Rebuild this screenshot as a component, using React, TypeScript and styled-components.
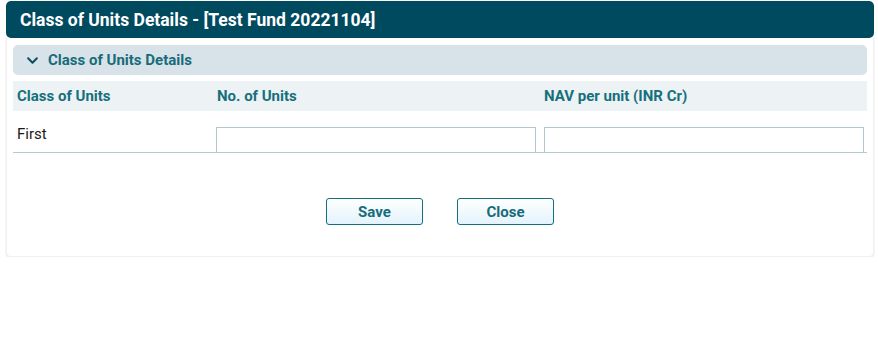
import React from 'react';
import styled, { createGlobalStyle } from 'styled-components';

const GlobalStyle = createGlobalStyle`
  html, body {
    margin: 0;
    padding: 0;
    background: #ffffff;
    font-family: Roboto, "Liberation Sans", Arial, sans-serif;
  }
  * { box-sizing: border-box; }
`;

const Page = styled.div`
  padding: 1px 4px 0 6px;
  width: 878px;
`;

const Window = styled.div`
  width: 868px;
`;

const TitleBar = styled.div`
  height: 37px;
  background: #004a5f;
  border-radius: 5px;
  color: #ffffff;
  font-weight: 700;
  font-size: 17.5px;
  display: flex;
  align-items: center;
  padding-left: 14px;
`;

const Panel = styled.div`
  background: #ffffff;
  border: 1px solid #f0f0f0;
  border-top: none;
  border-radius: 0 0 5px 5px;
  box-shadow: 0 1px 2px rgba(0, 0, 0, 0.12);
  padding: 7px 6px 31px 6px;
`;

const AccordionHeader = styled.div`
  height: 30px;
  background: #d8e3e9;
  border-radius: 5px;
  display: flex;
  align-items: center;
  gap: 8px;
  padding-left: 12px;
  color: #176b7a;
  font-weight: 700;
  font-size: 15px;
`;

const Grid = styled.div`
  display: grid;
  grid-template-columns: 200px 328px 1fr;
  margin-top: 6px;
`;

const HeadCell = styled.div<{ $pad?: number }>`
  height: 30px;
  background: #edf2f5;
  display: flex;
  align-items: center;
  padding-left: ${({ $pad }) => $pad ?? 4}px;
  color: #16707c;
  font-weight: 700;
  font-size: 15px;
`;

const BodyCell = styled.div<{ $right?: number }>`
  height: 42px;
  border-bottom: 1px solid #b5c9d0;
  display: flex;
  align-items: flex-end;
  padding: 0 ${({ $right }) => $right ?? 3}px 0 3px;
`;

const LabelCell = styled(BodyCell)`
  align-items: flex-start;
  padding: 14px 0 0 4px;
  color: #1b1b1b;
  font-size: 15px;
`;

const Field = styled.input`
  width: 100%;
  height: 25px;
  border: 1px solid #b3c9d0;
  border-bottom-width: 0;
  background: #ffffff;
  outline: none;
  font-family: inherit;
  font-size: 14px;
  padding: 0 4px;
`;

const Actions = styled.div`
  display: flex;
  justify-content: center;
  gap: 34px;
  margin-top: 45px;
`;

const Button = styled.button`
  width: 97px;
  height: 27px;
  border: 1px solid #127078;
  border-radius: 3px;
  background: linear-gradient(#ffffff, #e3f3fc);
  color: #176b7a;
  font-family: inherit;
  font-weight: 700;
  font-size: 15px;
  cursor: pointer;
`;

const Chevron = () => (
  <svg width="15" height="15" viewBox="0 0 24 24" fill="none" stroke="#0d4d5e" strokeWidth="3.2" strokeLinecap="round" strokeLinejoin="round">
    <path d="M5 8.5l7 7 7-7" />
  </svg>
);

export default function App() {
  return (
    <Page>
      <GlobalStyle />
      <Window>
        <TitleBar>Class of Units Details - [Test Fund 20221104]</TitleBar>
        <Panel>
          <AccordionHeader>
            <Chevron />
            Class of Units Details
          </AccordionHeader>
          <Grid>
            <HeadCell>Class of Units</HeadCell>
            <HeadCell>No. of Units</HeadCell>
            <HeadCell $pad={3}>NAV per unit (INR Cr)</HeadCell>
            <LabelCell>First</LabelCell>
            <BodyCell $right={5}>
              <Field />
            </BodyCell>
            <BodyCell>
              <Field />
            </BodyCell>
          </Grid>
          <Actions>
            <Button>Save</Button>
            <Button>Close</Button>
          </Actions>
        </Panel>
      </Window>
    </Page>
  );
}
